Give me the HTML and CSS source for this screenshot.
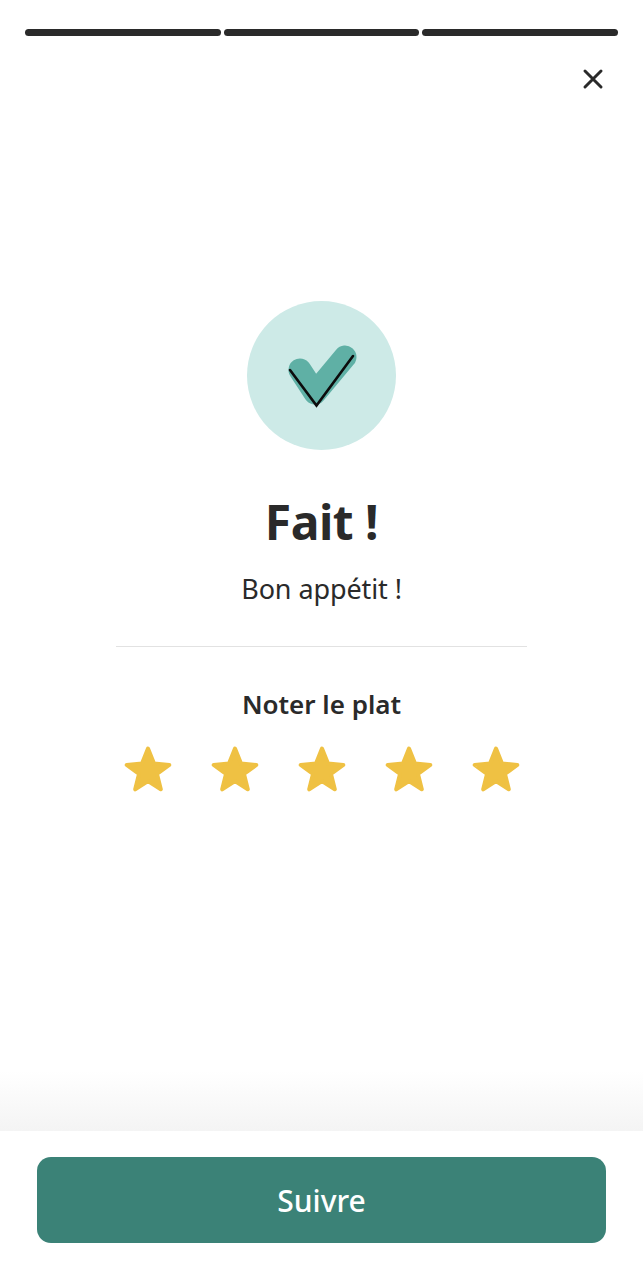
FILE: index.html
```html
<!DOCTYPE html>
<html lang="fr">
<head>
    <meta charset="UTF-8">
    <meta name="viewport" content="width=device-width, initial-scale=1.0">
    <title>Fait !</title>
    <link rel="stylesheet" href="styles.css">
</head>
<body>
    <div class="screen">
        <div class="progress">
            <span class="progress-step"></span>
            <span class="progress-step"></span>
            <span class="progress-step"></span>
        </div>

        <div class="close-row">
            <button class="close-btn" aria-label="Fermer">
                <svg width="22" height="22" viewBox="0 0 22 22">
                    <path d="M3 3L19 19M19 3L3 19" fill="none" stroke="#2a2a2a" stroke-width="3" stroke-linecap="round"/>
                </svg>
            </button>
        </div>

        <main class="content">
            <div class="done-circle">
                <svg width="149" height="149" viewBox="0 0 149 149">
                    <path d="M53 69L68 92L98 56" fill="none" stroke="#5fb0a5" stroke-width="23" stroke-linecap="round" stroke-linejoin="round"/>
                    <path d="M43 69L69.5 104.5L106 55" fill="none" stroke="#0c0c0c" stroke-width="2.6" stroke-linecap="round" stroke-linejoin="miter"/>
                </svg>
            </div>
            <h1 class="title">Fait !</h1>
            <p class="subtitle">Bon appétit !</p>
            <hr class="divider">
            <h2 class="rate-label">Noter le plat</h2>
            <div class="stars">
                <svg class="star" viewBox="0 0 50 50"><use href="#star-shape"/></svg>
                <svg class="star" viewBox="0 0 50 50"><use href="#star-shape"/></svg>
                <svg class="star" viewBox="0 0 50 50"><use href="#star-shape"/></svg>
                <svg class="star" viewBox="0 0 50 50"><use href="#star-shape"/></svg>
                <svg class="star" viewBox="0 0 50 50"><use href="#star-shape"/></svg>
            </div>
        </main>

        <footer class="footer">
            <button class="next-btn">Suivre</button>
        </footer>
    </div>

    <svg width="0" height="0" class="defs">
        <defs>
            <polygon id="star-shape" points="25,4.5 31,19.5 46.3,21 34,30 37.8,45.3 25,37 12.2,45.3 16,30 3.7,21 19,19.5" fill="#efc143" stroke="#efc143" stroke-width="4" stroke-linejoin="round"/>
        </defs>
    </svg>
</body>
</html>
```

FILE: styles.css
```css
* {
    box-sizing: border-box;
}
body {
    margin: 0;
    background-color: #fff;
    font-family: "Noto Sans", Roboto, sans-serif;
    color: #2a2a2a;
}
.screen {
    height: 1280px;
    display: flex;
    flex-direction: column;
    overflow: hidden;
}
.progress {
    display: flex;
    gap: 3px;
    padding: 29px 25px 0;
}
.progress-step {
    flex: 1;
    height: 7px;
    background-color: #2a2a2a;
    border-radius: 4px;
}
.close-row {
    display: flex;
    justify-content: flex-end;
    padding: 32px 39px 0 0;
}
.close-btn {
    display: flex;
    width: 22px;
    height: 22px;
    padding: 0;
    background: none;
    border: none;
}
.content {
    flex: 1;
    display: flex;
    flex-direction: column;
    align-items: center;
    padding-top: 211px;
}
.done-circle {
    width: 149px;
    height: 149px;
    background-color: #cdeae7;
    border-radius: 50%;
}
.done-circle svg {
    display: block;
}
.title {
    margin: 38px 0 0;
    font-size: 48px;
    line-height: 68px;
    font-weight: 700;
    letter-spacing: -0.5px;
}
.subtitle {
    margin: 14px 0 0;
    font-size: 27px;
    line-height: 38px;
    letter-spacing: -0.1px;
}
.divider {
    width: 411px;
    height: 1px;
    margin: 38px 0 0;
    background-color: #e2e2e2;
    border: none;
}
.rate-label {
    margin: 38px 0 0;
    font-size: 26px;
    line-height: 38px;
    font-weight: 600;
}
.stars {
    display: flex;
    gap: 37px;
    margin-top: 21px;
}
.star {
    display: block;
    width: 50px;
    height: 50px;
}
.footer {
    position: relative;
    height: 149px;
    padding: 26px 37px 0;
    background-color: #fff;
}
.footer::before {
    content: "";
    position: absolute;
    left: 0;
    right: 0;
    top: -60px;
    height: 60px;
    background: linear-gradient(to bottom, rgba(244,244,244,0), #f4f4f4);
}
.next-btn {
    display: block;
    width: 100%;
    height: 86px;
    background-color: #3b8277;
    color: #fff;
    border: none;
    border-radius: 14px;
    font-family: inherit;
    font-size: 30px;
    font-weight: 500;
}
.defs {
    position: absolute;
}
```
